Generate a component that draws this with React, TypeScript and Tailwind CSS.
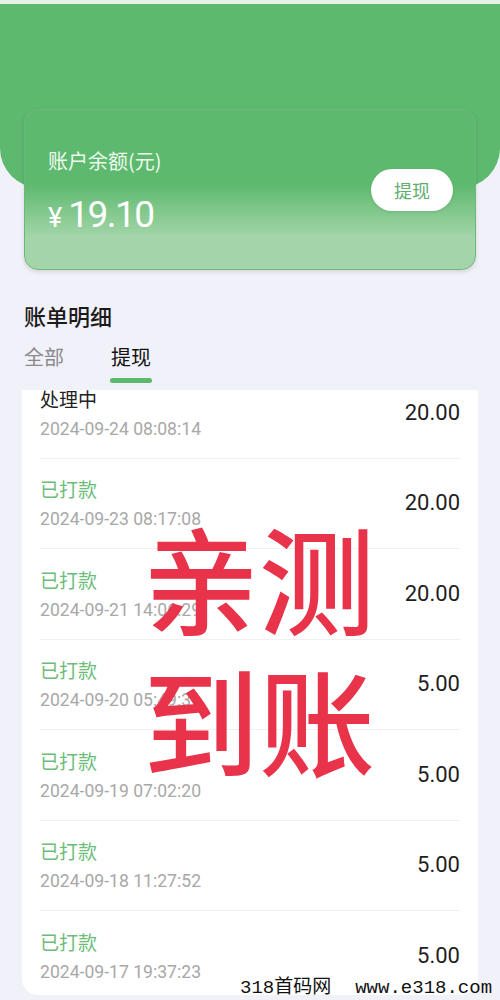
import React from "react";

interface Record {
  status: string;
  time: string;
  amount: string;
}

const records: Record[] = [
  { status: "处理中", time: "2024-09-24 08:08:14", amount: "20.00" },
  { status: "已打款", time: "2024-09-23 08:17:08", amount: "20.00" },
  { status: "已打款", time: "2024-09-21 14:06:29", amount: "20.00" },
  { status: "已打款", time: "2024-09-20 05:49:31", amount: "5.00" },
  { status: "已打款", time: "2024-09-19 07:02:20", amount: "5.00" },
  { status: "已打款", time: "2024-09-18 11:27:52", amount: "5.00" },
  { status: "已打款", time: "2024-09-17 19:37:23", amount: "5.00" },
];

const cjk = "font-['Noto_Sans_CJK_SC',sans-serif]";
const num = "font-['Roboto','Noto_Sans_CJK_SC',sans-serif]";

export default function App() {
  return (
    <div className={`relative h-[1000px] w-[500px] overflow-hidden bg-[#f1f1f9] ${cjk}`}>
      {/* top strip + green header */}
      <div className="h-[4px] bg-[#e4f1e6]" />
      <div className="h-[184px] rounded-b-[40px] bg-[#5cb96d]" />

      {/* balance card */}
      <div className="relative mx-[24px] -mt-[79px] flex h-[161px] items-start justify-between rounded-[14px] border border-[#6fb67b] bg-[linear-gradient(180deg,#5cb96d_46%,#a3d5a9_80%)] shadow-[0_2px_4px_rgba(0,0,0,0.12)]">
        <div className="pl-[23px] pt-[37px]">
          <p className="text-[20px] leading-[28px] text-[#effaf0]">账户余额(元)</p>
          <div className="mt-[18px] flex items-baseline text-white">
            <span className={`${num} text-[27px] leading-[44px]`}>¥</span>
            <span className={`${num} ml-[6px] text-[37px] leading-[44px] tracking-[-1.5px]`}>
              19.10
            </span>
          </div>
        </div>
        <button className="mr-[22px] mt-[59px] flex h-[42px] w-[82px] items-center justify-center rounded-full bg-white text-[18px] text-[#5fae6e] shadow-[0_1px_3px_rgba(0,0,0,0.1)]">
          提现
        </button>
      </div>

      {/* bill header */}
      <h2 className="ml-[24px] mt-[30px] text-[22px] font-medium leading-[30px] text-[#1a1a1a]">
        账单明细
      </h2>
      <div className="ml-[24px] mt-[13px] flex items-start gap-[46px]">
        <span className="text-[20px] leading-[28px] text-[#8a8a8a]">全部</span>
        <div className="flex flex-col items-center">
          <span className="text-[20px] leading-[28px] text-[#111]">提现</span>
          <div className="mt-[7px] h-[5px] w-[42px] rounded-full bg-[#5cb96d]" />
        </div>
      </div>

      {/* records */}
      <div className="mx-[22px] mt-[7px] h-[605px] overflow-hidden rounded-b-[16px] bg-white">
        <div className="-mt-[22px] px-[18px]">
          {records.map((r, i) => (
            <div
              key={i}
              className="flex h-[90.5px] items-center justify-between border-b border-[#f0f0f2]"
            >
              <div className="flex flex-col">
                <span
                  className={`text-[19px] leading-[26px] ${
                    r.status === "处理中" ? "text-[#222]" : "text-[#6cbd7a]"
                  }`}
                >
                  {r.status}
                </span>
                <span className={`${num} mt-[6px] text-[17.6px] leading-[22px] text-[#a8a8a8]`}>
                  {r.time}
                </span>
              </div>
              <span className={`${num} text-[22px] leading-[30px] text-[#1e1e1e]`}>
                {r.amount}
              </span>
            </div>
          ))}
        </div>
      </div>

      {/* red stamp text */}
      <div className="absolute left-[143px] top-[504px] text-[116px] font-medium leading-[142px] text-[#e8334a]">
        <p>亲测</p>
        <p>到账</p>
      </div>

      {/* watermark */}
      <div className="absolute left-[240px] top-[976px] flex gap-[24px] font-['Liberation_Mono','Noto_Sans_CJK_SC',monospace] text-[19px] leading-[24px] text-[#111]">
        <span>318首码网</span>
        <span>www.e318.com</span>
      </div>
    </div>
  );
}
